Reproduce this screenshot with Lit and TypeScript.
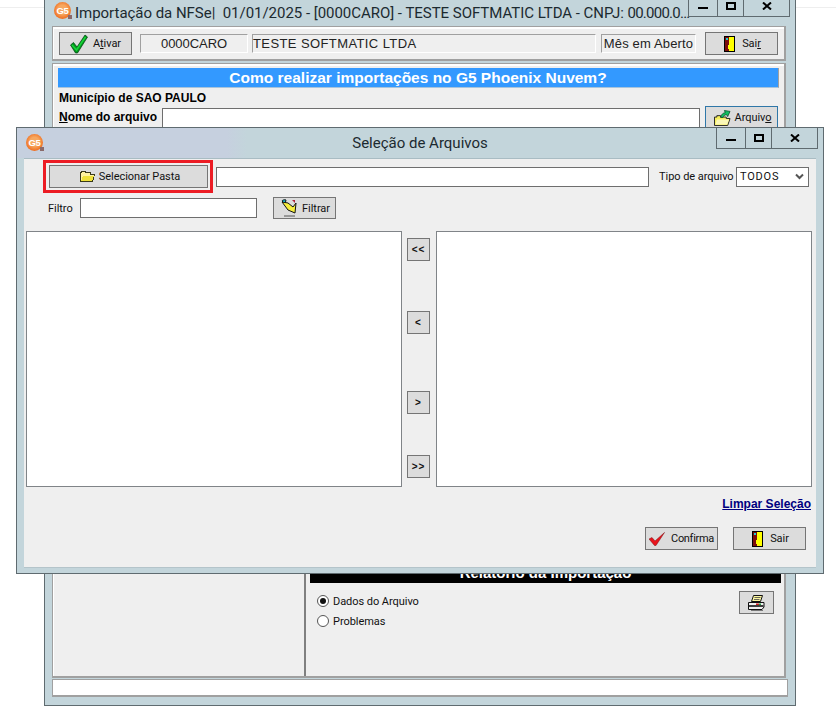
import { LitElement, html, css, svg } from "lit";
import { customElement } from "lit/decorators.js";

const logo = html`<span class="logo"><span class="logo-t">G5</span><span class="logo-b"></span></span>`;

const winButtons = html`<div class="wb">
  <span class="wb1"><svg width="10" height="2"><rect width="10" height="2" fill="#000"/></svg></span>
  <span class="wb2"><svg width="10" height="8"><rect x="1" y="1" width="8" height="6" fill="none" stroke="#000" stroke-width="2"/></svg></span>
  <span class="wb3"><svg width="10" height="8" viewBox="0 0 10 8"><path d="M1 0.5 9 7.5M9 0.5 1 7.5" stroke="#000" stroke-width="2" fill="none"/></svg></span>
</div>`;

const check = html`<svg width="18" height="20" viewBox="0 0 18 20">
  <path d="M0.5 11 3.5 8.5 7 13 15 1 17.5 3 7.5 19 5.5 19Z" fill="#009a1c" stroke="#003a10" stroke-width=".7"/>
  <path d="M2 11 6.5 16 15.5 3" fill="none" stroke="#19d43a" stroke-width="1.4"/>
</svg>`;

const redCheck = html`<svg width="16" height="14" viewBox="0 0 16 14">
  <path d="M0 7 3 5.5 6 9 15.5 0.5 7 13.5 5.5 13.5Z" fill="#e8141c" stroke="#7a0c10" stroke-width=".5"/>
</svg>`;

const door = html`<svg width="11" height="16" viewBox="0 0 11 16" shape-rendering="crispEdges">
  <rect width="11" height="16" fill="#000"/>
  <rect x="1" y="1" width="9" height="14" fill="#ffff00"/>
  <path d="M1 1H5V9H4V13H5V15H1Z" fill="#7b0c0c"/>
  <rect x="2" y="2" width="2" height="2" fill="#22c8d8"/>
</svg>`;

const folderOpen = html`<svg width="15" height="11" viewBox="0 0 15 11" shape-rendering="crispEdges">
  <path d="M0.500 10.500V1.500H1.500V0.500H5.500V1.500H10.500V3.500H14.500L12.500 10.500Z" fill="#fff3a0" stroke="#3a3a1a"/>
  <path d="M3 5H14L12 10H1Z" fill="#efe23c"/>
</svg>`;

const folderArrow = html`<svg width="17" height="16" viewBox="0 0 18 17">
  <path d="M0.500 16.500V7.500H3V6H7V7.500H13V9H17L14.500 16.500Z" fill="#f6ee5e" stroke="#222" stroke-width="1"/>
  <path d="M3 10H16L14 15.500H1.500Z" fill="#fbf8b8"/>
  <path d="M7 8C8 4 10 3 12 3L11 0.500 17 1.500 14.500 7 13.500 5C11.500 5 10 6 9.500 8Z" fill="#10c060" stroke="#0a4a2a" stroke-width=".8"/>
</svg>`;

const filterIcon = html`<svg width="16" height="18" viewBox="0 0 16 18">
  <path d="M1 2C1 1 4 0.500 5 1L4 5Z" fill="#18c8e0" stroke="#111" stroke-width="1"/>
  <path d="M1 3 7 11 14 14 15 4 12 8 7 4Z" fill="#f6ee3c" stroke="#111" stroke-width="1"/>
  <path d="M11 1 14 1 14 4Z" fill="#b0203a"/>
  <path d="M3 17H14" stroke="#555" stroke-width="1"/>
</svg>`;

const printer = html`<svg width="17" height="16" viewBox="0 0 17 16">
  <path d="M5.500 0.500H14.500L12.500 6.500H3.500Z" fill="#fbf6a0" stroke="#111" stroke-width="1"/>
  <path d="M6.500 2.500H12.500M6 4.500H11.500" stroke="#444" stroke-width=".8"/>
  <path d="M0.500 7.500H16V12L14 14.500H0.500Z" fill="#f0f0f0" stroke="#111" stroke-width="1"/>
  <path d="M1 11H15.500" stroke="#111" stroke-width="1.600"/>
  <rect x="8" y="8.500" width="3" height="1.500" fill="#d02020"/>
  <rect x="11" y="8.500" width="2" height="1.500" fill="#20a040"/>
  <path d="M3 15.500H15" stroke="#777" stroke-width="1"/>
</svg>`;

const chevron = svg`<path d="M1 1.500 4.500 5 8 1.500" fill="none" stroke="#555" stroke-width="2"/>`;

@customElement("app-root")
export class AppRoot extends LitElement {
  static styles = css`
    :host {
      display: block;
      position: relative;
      width: 836px;
      height: 716px;
      overflow: hidden;
      background: linear-gradient(#fff 7px, #eeeeee 7px, #eeeeee 8px, #fff 8px);
      font-family: Roboto, "Liberation Sans", Arial, sans-serif;
      font-size: 11px;
      letter-spacing: -.05px;
      color: #111;
    }
    * { box-sizing: border-box; }

    /* windows on the desktop */
    .window {
      position: absolute;
      display: flex;
      flex-direction: column;
      background: #c3d5db;
      border: 1px solid #5f6b70;
    }
    .main {
      left: 44px;
      top: -5px;
      width: 752px;
      height: 711px;
      padding: 0 7px 8px 7px;
    }
    .dialog {
      left: 16px;
      top: 127px;
      width: 808px;
      height: 447px;
      padding: 0 7px 5px 7px;
    }
    .title {
      flex: none;
      height: 30px;
      display: flex;
      align-items: flex-start;
      position: relative;
      font-family: Roboto, sans-serif;
      letter-spacing: 0;
      color: #1c2a30;
    }
    .main .title { padding-left: 2px; }
    .dialog .title {
      margin: 0 -7px;
      padding-left: 9px;
      background: linear-gradient(90deg, #c6d0df 0 210px, #c3d5db 230px);
    }
    .logo {
      position: relative;
      flex: none;
      width: 17px;
      height: 17px;
      margin-top: 6px;
      border-radius: 50%;
      background: radial-gradient(circle at 50% 45%, #f7a860 0 35%, #ee6a1c 75%, #e2520c);
      display: flex;
      align-items: center;
      justify-content: center;
    }
    .logo-t {
      font: bold 9.500px "Liberation Sans", sans-serif;
      letter-spacing: -.3px;
      color: #fff;
    }
    .logo-b {
      position: absolute;
      right: -1px;
      bottom: 0;
      width: 4px;
      height: 4px;
      background: #8a6a6a;
    }
    .main .title-text {
      margin: 6px 0 0 4px;
      font-size: 15px;
      line-height: 22px;
      white-space: pre;
      letter-spacing: -.03px;
    }
    .title-end { letter-spacing: -.75px; }
    .dialog .title-text {
      position: absolute;
      left: 0;
      right: 0;
      top: 5px;
      text-align: center;
      font-size: 15px;
      line-height: 20px;
    }
    .wb {
      position: absolute;
      top: 0;
      height: 21px;
      display: flex;
      border: 1px solid #5f6b70;
      border-top: none;
      background: #c3d5db;
      z-index: 1;
    }
    .main .wb { right: -2px; }
    .dialog .wb { right: 5px; }
    .wb span {
      height: 20px;
      display: flex;
      align-items: flex-start;
      justify-content: center;
      border-left: 1px solid #5f6b70;
    }
    .wb span:first-child { border-left: none; }
    .wb1 { width: 28px; padding-top: 11px; }
    .wb2 { width: 26px; padding-top: 6px; }
    .wb3 { width: 46px; padding-top: 6px; }

    /* common controls */
    .btn {
      display: flex;
      align-items: center;
      justify-content: center;
      flex: none;
      width: 73px;
      height: 23px;
      gap: 5px;
      background: #dcdcdc;
      border: 1px solid #757575;
      color: #111;
    }
    .btn-door { gap: 7px; padding-left: 2px; }
    .btn-confirm { letter-spacing: -.3px; gap: 6px; }
    .input {
      flex: none;
      height: 20px;
      background: #fff;
      border: 1px solid #6e6e6e;
    }

    /* main window */
    .panel {
      flex: none;
      margin-right: 2px;
      background: #efefef;
      border-style: solid;
      border-color: #a0a0a0;
      border-width: 1px 2px 2px 1px;
      box-shadow: inset 1px 1px 0 #fff, inset 0 2px 0 #fff;
    }
    .toolbar {
      height: 35px;
      display: flex;
      align-items: center;
      padding-left: 6px;
      padding-top: 1px;
      margin-bottom: 2px;
    }
    .toolbar .btn:first-child { margin-right: 8px; }
    .field {
      flex: none;
      height: 19px;
      font: 13px/18px "Liberation Sans", sans-serif;
      white-space: nowrap;
      color: #222;
      background: #efefef;
      border: 1px solid;
      border-color: #a0a0a0 #fff #fff #a0a0a0;
    }
    .f1 { width: 108px; text-align: center; margin-right: 4px; }
    .f2 { width: 344px; margin-right: 5px; letter-spacing: .4px; }
    .f3 { width: 95px; text-align: center; margin-right: 9px; letter-spacing: .15px; }
    .work {
      flex: 1;
      min-height: 0;
      margin-bottom: 1px;
      display: flex;
      flex-direction: column;
      padding: 4px 5px 0 5px;
    }
    .banner {
      flex: none;
      height: 20px;
      background: #3399ff;
      color: #fff;
      font: bold 15.500px/20px "Liberation Sans", sans-serif;
      letter-spacing: 0;
      text-align: center;
      border-bottom: 1px solid #a8c4dc;
      border-right: 1px solid #a0a0a0;
    }
    .muni {
      flex: none;
      height: 16px;
      margin-top: 2px;
      padding-left: 1px;
      font: bold 12px/16px "Liberation Sans", sans-serif;
      letter-spacing: 0;
      color: #000;
    }
    .file-row {
      flex: none;
      display: flex;
      align-items: flex-end;
      height: 23px;
      padding-left: 1px;
    }
    .file-label {
      width: 103px;
      height: 21px;
      font: bold 12px/19px "Liberation Sans", sans-serif;
      letter-spacing: 0;
      color: #000;
    }
    .file-input { width: 538px; height: 21px; margin-right: 5px; }
    .btn-focus { border-color: #2f77a8; gap: 4px; padding-left: 2px; }
    .split {
      flex: 1;
      min-height: 0;
      display: flex;
      margin: 3px -5px 0 -5px;
    }
    .pane-left { flex: none; width: 253px; border-right: 2px solid #808080; }
    .pane-right {
      flex: 1;
      display: flex;
      flex-direction: column;
      justify-content: flex-end;
      padding: 0 3px 0 4px;
    }
    .black {
      flex: none;
      height: 20px;
      background: #000;
      color: #fff;
      font: bold 15px/20px "Liberation Sans", sans-serif;
      letter-spacing: 0;
      text-align: center;
    }
    .opts {
      flex: none;
      height: 93px;
      position: relative;
      padding: 8px 0 0 7px;
    }
    .radio-row {
      display: flex;
      align-items: center;
      gap: 4px;
      height: 20px;
    }
    .radio {
      flex: none;
      width: 12px;
      height: 12px;
      border-radius: 50%;
      border: 1px solid #555;
      background: #fff;
      display: flex;
      align-items: center;
      justify-content: center;
    }
    .radio i { width: 6px; height: 6px; border-radius: 50%; background: #111; }
    .print {
      position: absolute;
      top: 8px;
      right: 7px;
      width: 35px;
    }
    .status {
      flex: none;
      height: 18px;
      background: #fff;
      border-style: solid;
      border-color: #a0a0a0;
      border-width: 1px 1px 2px 1px;
    }

    /* dialog */
    .client {
      flex: 1;
      min-height: 0;
      background: #efefef;
      border-top: 1px solid #a9bcc3;
      border-bottom: 1px solid #b4c4ca;
      display: flex;
      flex-direction: column;
    }
    .row1 {
      flex: none;
      display: flex;
      align-items: center;
      height: 34px;
      padding: 1px 0 0 19px;
    }
    .redbox {
      flex: none;
      padding: 2px 2px 2px 3px;
      border: 3px solid #ec1c24;
      margin-right: 3px;
    }
    .btn-folder { width: 159px; gap: 4px; padding-left: 3px; }
    .path { width: 433px; margin-right: 10px; }
    .lbl-type { width: 73px; margin-right: 4px; white-space: nowrap; }
    .select {
      width: 73px;
      display: flex;
      align-items: center;
      justify-content: space-between;
      padding: 0 4px 0 3px;
      letter-spacing: .8px;
    }
    .row2 {
      flex: none;
      display: flex;
      align-items: center;
      height: 22px;
      margin-top: 4px;
      padding-left: 24px;
    }
    .lbl-filter { width: 32px; }
    .filter { width: 177px; margin-right: 16px; }
    .btn-filter { width: 63px; height: 22px; gap: 5px; padding-left: 2px; }
    .lists {
      flex: none;
      display: flex;
      height: 256px;
      margin-top: 12px;
      padding-left: 2px;
    }
    .list {
      flex: none;
      width: 376px;
      background: #fff;
      border: 1px solid #808488;
    }
    .arrows {
      flex: none;
      width: 34px;
      display: flex;
      flex-direction: column;
      padding: 7px 0 0 5px;
    }
    .arrow {
      width: 23px;
      font: bold 10px "Liberation Sans", sans-serif;
      letter-spacing: 1px;
    }
    .a2 { margin-top: 50px; }
    .a3 { margin-top: 57px; }
    .a4 { margin-top: 41px; }
    .clear {
      flex: none;
      height: 14px;
      margin-top: 10px;
      padding-right: 5px;
      text-align: right;
      font: bold 12px/14px "Liberation Sans", sans-serif;
      letter-spacing: 0;
      color: #000080;
      text-decoration: underline;
    }
    .foot {
      flex: none;
      display: flex;
      justify-content: flex-end;
      gap: 15px;
      margin-top: 16px;
      padding-right: 10px;
    }
  `;

  render() {
    return html`
      <div class="window main">
        <div class="title">
          ${logo}
          <span class="title-text">Importação da NFSe|  01/01/2025 - [0000CARO] - TESTE SOFTMATIC LTDA - CNPJ: <span class="title-end">00.000.0...</span></span>
          ${winButtons}
        </div>
        <div class="panel toolbar">
          <div class="btn">${check}<span>A<u>t</u>ivar</span></div>
          <div class="field f1">0000CARO</div>
          <div class="field f2">TESTE SOFTMATIC LTDA</div>
          <div class="field f3">Mês em Aberto</div>
          <div class="btn btn-door">${door}<span>Sai<u>r</u></span></div>
        </div>
        <div class="panel work">
          <div class="banner">Como realizar importações no G5 Phoenix Nuvem?</div>
          <div class="muni">Município de SAO PAULO</div>
          <div class="file-row">
            <div class="file-label"><u>N</u>ome do arquivo</div>
            <div class="input file-input"></div>
            <div class="btn btn-focus">${folderArrow}<span>Arquiv<u>o</u></span></div>
          </div>
          <div class="split">
            <div class="pane-left"></div>
            <div class="pane-right">
              <div class="black">Relatório da Importação</div>
              <div class="opts">
                <div class="radio-row"><span class="radio"><i></i></span>Dados do Arquivo</div>
                <div class="radio-row"><span class="radio"></span>Problemas</div>
                <div class="btn print">${printer}</div>
              </div>
            </div>
          </div>
        </div>
        <div class="status"></div>
      </div>

      <div class="window dialog">
        <div class="title">
          ${logo}
          <span class="title-text">Seleção de Arquivos</span>
          ${winButtons}
        </div>
        <div class="client">
          <div class="row1">
            <div class="redbox"><div class="btn btn-folder">${folderOpen}<span>Selecionar Pasta</span></div></div>
            <div class="input path"></div>
            <span class="lbl-type">Tipo de arquivo</span>
            <div class="input select"><span>TODOS</span><svg width="9" height="7">${chevron}</svg></div>
          </div>
          <div class="row2">
            <span class="lbl-filter">Filtro</span>
            <div class="input filter"></div>
            <div class="btn btn-filter">${filterIcon}<span>Filtrar</span></div>
          </div>
          <div class="lists">
            <div class="list"></div>
            <div class="arrows">
              <div class="btn arrow">&lt;&lt;</div>
              <div class="btn arrow a2">&lt;</div>
              <div class="btn arrow a3">&gt;</div>
              <div class="btn arrow a4">&gt;&gt;</div>
            </div>
            <div class="list"></div>
          </div>
          <div class="clear">Limpar Seleção</div>
          <div class="foot">
            <div class="btn btn-confirm">${redCheck}<span>Confirma</span></div>
            <div class="btn btn-door">${door}<span>Sair</span></div>
          </div>
        </div>
      </div>
    `;
  }
}
